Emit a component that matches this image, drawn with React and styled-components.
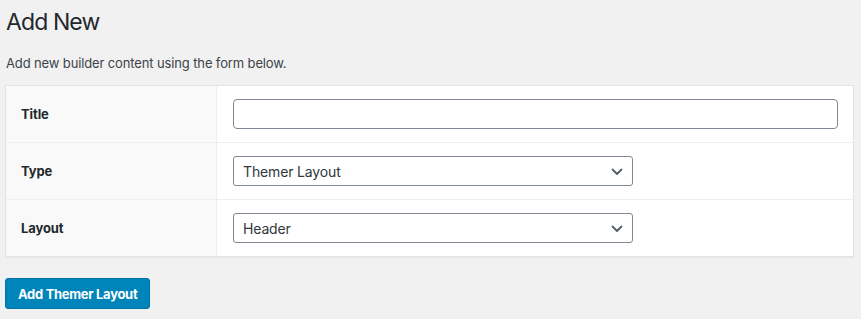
import React from "react";
import styled, { createGlobalStyle } from "styled-components";

const GlobalStyle = createGlobalStyle`
  html, body {
    margin: 0;
    padding: 0;
    background: #f1f1f1;
  }
  body {
    font-family: Inter, "Noto Sans", "Liberation Sans", sans-serif;
    color: #444;
  }
`;

const chevron =
  "data:image/svg+xml;utf8," +
  encodeURIComponent(
    '<svg xmlns="http://www.w3.org/2000/svg" width="12" height="8" viewBox="0 0 12 8"><path d="M1.5 1.5 L6 6 L10.5 1.5" fill="none" stroke="#555d66" stroke-width="1.8" stroke-linecap="round" stroke-linejoin="round"/></svg>'
  );

const Wrap = styled.div`
  padding: 7px 7px 10px 5px;
`;

const Heading = styled.h1`
  margin: 0 0 0 1px;
  font-size: 23px;
  font-weight: 400;
  line-height: 30px;
  letter-spacing: -0.9px;
  color: #23282d;
`;

const Intro = styled.p`
  margin: 17px 0 13px 1px;
  font-size: 13px;
  line-height: 18px;
  letter-spacing: -0.13px;
  color: #3c434a;
`;

const FormTable = styled.table`
  box-sizing: border-box;
  width: 849px;
  table-layout: fixed;
  border-collapse: separate;
  border-spacing: 0;
  background: #fff;
  border: 1px solid #e2e4e7;
  box-shadow: 0 1px 1px rgba(0, 0, 0, 0.04);
`;

const Row = styled.tr`
  & + & > * {
    border-top: 1px solid #eceef0;
  }
`;

const Label = styled.th`
  width: 179px;
  padding: 13px 16px 13px 15px;
  background: #f9f9f9;
  border-right: 1px solid #eceef0;
  text-align: left;
  font-size: 13px;
  font-weight: 700;
  letter-spacing: -0.1px;
  color: #23282d;
`;

const Cell = styled.td`
  padding: 13px 15px 13px 16px;
`;

const TextInput = styled.input`
  display: block;
  box-sizing: border-box;
  width: 100%;
  height: 30px;
  margin: 0;
  padding: 0 8px;
  border: 1px solid #7e8993;
  border-radius: 4px;
  background: #fff;
  font-family: inherit;
  font-size: 14px;
  outline: none;
`;

const Select = styled.select`
  display: block;
  box-sizing: border-box;
  width: ${(p) => p.$width}px;
  height: 30px;
  margin: 0;
  padding: 0 24px 0 9px;
  border: 1px solid #7e8993;
  border-radius: 3px;
  background: #fff url("${chevron}") no-repeat right 9px top 55%;
  background-size: 12px 8px;
  appearance: none;
  -webkit-appearance: none;
  font-family: inherit;
  font-size: 14px;
  letter-spacing: -0.15px;
  color: #32373c;
  outline: none;
`;

const Button = styled.button`
  margin-top: 21px;
  height: 31px;
  padding: 0 12px;
  border: 1px solid #0073aa;
  border-radius: 3px;
  background: #0085ba;
  color: #fff;
  font-family: inherit;
  font-size: 13px;
  font-weight: 700;
  letter-spacing: -0.3px;
  cursor: pointer;
`;

export default function App() {
  return (
    <>
      <GlobalStyle />
      <Wrap>
        <Heading>Add New</Heading>
        <Intro>Add new builder content using the form below.</Intro>
        <FormTable>
          <tbody>
            <Row>
              <Label>Title</Label>
              <Cell>
                <TextInput type="text" />
              </Cell>
            </Row>
            <Row>
              <Label>Type</Label>
              <Cell>
                <Select $width={400} defaultValue="theme-layout">
                  <option value="theme-layout">Themer Layout</option>
                </Select>
              </Cell>
            </Row>
            <Row>
              <Label>Layout</Label>
              <Cell>
                <Select $width={400} defaultValue="header">
                  <option value="header">Header</option>
                </Select>
              </Cell>
            </Row>
          </tbody>
        </FormTable>
        <Button>Add Themer Layout</Button>
      </Wrap>
    </>
  );
}
